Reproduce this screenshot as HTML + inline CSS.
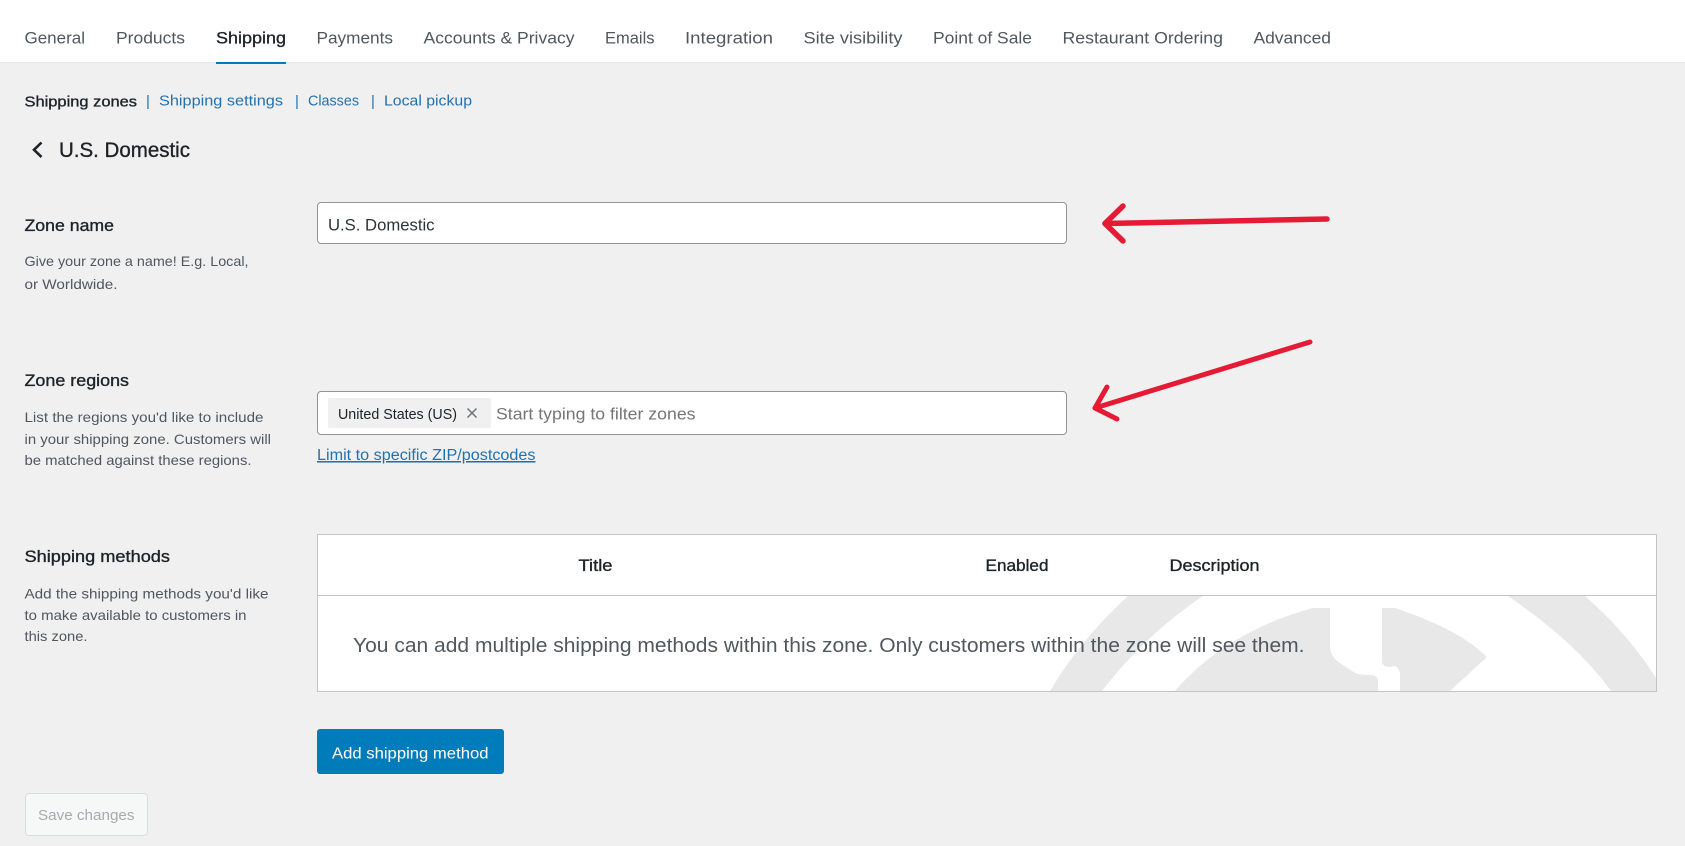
<!DOCTYPE html>
<html lang="en">
<head>
<meta charset="utf-8">
<title>Shipping zones</title>
<style>
html,body{margin:0;padding:0;width:1685px;height:846px;overflow:hidden;background:#f0f0f0;font-family:"Liberation Sans",sans-serif}
.abs{position:absolute;box-sizing:border-box}
svg{position:absolute;left:0;top:0}
text{font-family:"Liberation Sans",sans-serif}
.nav{font-size:17px;fill:#50575e}
.semi{stroke:currentColor;stroke-width:.35px}
.sub{font-size:15px;fill:#2271b1}
.lab{font-size:16.5px;fill:#1d2327;color:#1d2327}
.desc{font-size:14px;fill:#50575e}
.th{font-size:16.5px;fill:#1d2327;color:#1d2327}
</style>
</head>
<body>
<div class="abs" style="left:0;top:0;width:1685px;height:63px;background:#fff;border-bottom:1px solid #e6e6e6"></div>
<div class="abs" style="left:216px;top:62px;width:70px;height:2px;background:#007cba"></div>
<div class="abs" style="left:317px;top:202px;width:750px;height:42px;background:#fff;border:1px solid #949494;border-radius:4px"></div>
<div class="abs" style="left:317px;top:391px;width:750px;height:44px;background:#fff;border:1px solid #949494;border-radius:4px"></div>
<div class="abs" style="left:328px;top:398px;width:163px;height:30px;background:#f0f0f0;border-radius:2px"></div>
<div class="abs" style="left:317px;top:534px;width:1340px;height:158px;background:#fff;border:1px solid #c3c4c7"></div>
<div class="abs" style="left:318px;top:595px;width:1338px;height:1px;background:#c3c4c7"></div>
<div class="abs" style="left:317px;top:729px;width:187px;height:45px;background:#007cba;border-radius:3px"></div>
<div class="abs" style="left:25px;top:793px;width:123px;height:43px;background:#f6f7f7;border:1px solid #dcdcde;border-radius:4px"></div>

<svg width="1685" height="846" viewBox="0 0 1685 846">
  <defs><clipPath id="row"><rect x="318" y="596" width="1338" height="95"/></clipPath></defs>
  <g clip-path="url(#row)" fill="#e8e8e8">
    <path d="M1128 596Q1080 640 1050 691L1102 691Q1145 635 1203 596Z"/>
    <path d="M1175 691C1210 650 1260 622 1313 608L1330 608L1330 647C1331 655 1334 659 1340 663L1355 673C1360 675 1366 675 1373 675C1376 676 1378 678 1378 681L1378 691Z"/>
    <path d="M1382 608L1395 608C1430 620 1462 633 1487 657L1450 691L1400 691L1400 673C1399 669 1397 666 1395 666C1392 666 1391 667 1390 667C1387 667 1384 666 1382 663Z"/>
    <path d="M1508 596C1550 625 1585 655 1611 691L1660 691L1656 678C1635 645 1612 620 1585 596Z"/>
  </g>

  <g fill="none" stroke="#e51a34" stroke-linecap="round" stroke-linejoin="round">
    <path d="M1327 219L1105 223.5" stroke-width="5.5"/>
    <path d="M1123 206L1105 223.5L1123 241" stroke-width="5.5"/>
    <path d="M1310 342L1095 408" stroke-width="5"/>
    <path d="M1107 387L1095 408L1117 419" stroke-width="5"/>
  </g>

  <path d="M41.500 142.500L34 149.800L41.500 157" fill="none" stroke="#1d2327" stroke-width="2.600"/>

  <g lengthAdjust="spacingAndGlyphs">
  <text lengthAdjust="spacingAndGlyphs" class="nav" x="24.500" y="43.500" textLength="60.500">General</text>
  <text lengthAdjust="spacingAndGlyphs" class="nav" x="116" y="43.500" textLength="69">Products</text>
  <text lengthAdjust="spacingAndGlyphs" class="nav semi" x="216" y="43.500" textLength="70" style="fill:#1d2327;color:#1d2327">Shipping</text>
  <text lengthAdjust="spacingAndGlyphs" class="nav" x="316.500" y="43.500" textLength="76.500">Payments</text>
  <text lengthAdjust="spacingAndGlyphs" class="nav" x="423.500" y="43.500" textLength="151">Accounts &amp; Privacy</text>
  <text lengthAdjust="spacingAndGlyphs" class="nav" x="605" y="43.500" textLength="49.500">Emails</text>
  <text lengthAdjust="spacingAndGlyphs" class="nav" x="685" y="43.500" textLength="88">Integration</text>
  <text lengthAdjust="spacingAndGlyphs" class="nav" x="803.500" y="43.500" textLength="99">Site visibility</text>
  <text lengthAdjust="spacingAndGlyphs" class="nav" x="933" y="43.500" textLength="99">Point of Sale</text>
  <text lengthAdjust="spacingAndGlyphs" class="nav" x="1062.500" y="43.500" textLength="160.500">Restaurant Ordering</text>
  <text lengthAdjust="spacingAndGlyphs" class="nav" x="1253.500" y="43.500" textLength="77.500">Advanced</text>
  </g>

  <text lengthAdjust="spacingAndGlyphs" class="sub semi" x="24.500" y="106.500" textLength="112.500" style="fill:#1d2327;color:#1d2327">Shipping zones</text>
  <text class="sub" x="146" y="106">|</text>
  <text lengthAdjust="spacingAndGlyphs" class="sub" x="159" y="105.500" textLength="124">Shipping settings</text>
  <text class="sub" x="295" y="106">|</text>
  <text lengthAdjust="spacingAndGlyphs" class="sub" x="308" y="105.500" textLength="51">Classes</text>
  <text class="sub" x="371" y="106">|</text>
  <text lengthAdjust="spacingAndGlyphs" class="sub" x="384" y="105.500" textLength="88">Local pickup</text>

  <text lengthAdjust="spacingAndGlyphs" class="semi" x="59" y="157" font-size="21" textLength="131" style="fill:#1d2327;color:#1d2327">U.S. Domestic</text>

  <text lengthAdjust="spacingAndGlyphs" class="lab semi" x="24.500" y="231" textLength="89.500">Zone name</text>
  <text lengthAdjust="spacingAndGlyphs" class="desc" x="24.500" y="266" textLength="224">Give your zone a name! E.g. Local,</text>
  <text lengthAdjust="spacingAndGlyphs" class="desc" x="24.500" y="289" textLength="93">or Worldwide.</text>
  <text lengthAdjust="spacingAndGlyphs" x="328" y="230.500" font-size="17" textLength="106.500" fill="#2c3338">U.S. Domestic</text>

  <text lengthAdjust="spacingAndGlyphs" class="lab semi" x="24.500" y="386" textLength="104.500">Zone regions</text>
  <text lengthAdjust="spacingAndGlyphs" class="desc" x="24.500" y="422" textLength="239">List the regions you'd like to include</text>
  <text lengthAdjust="spacingAndGlyphs" class="desc" x="24.500" y="444" textLength="246.500">in your shipping zone. Customers will</text>
  <text lengthAdjust="spacingAndGlyphs" class="desc" x="24.500" y="465" textLength="227">be matched against these regions.</text>
  <text lengthAdjust="spacingAndGlyphs" x="338" y="419" font-size="14.500" textLength="119" fill="#1d2327">United States (US)</text>
  <path d="M467.500 408.500L476.500 417.500M476.500 408.500L467.500 417.500" stroke="#6b6f73" stroke-width="1.400" fill="none"/>
  <text lengthAdjust="spacingAndGlyphs" x="496" y="419.500" font-size="17" textLength="199.500" fill="#757575">Start typing to filter zones</text>
  <text lengthAdjust="spacingAndGlyphs" x="317" y="460" font-size="15.500" textLength="218.500" fill="#2271b1" text-decoration="underline">Limit to specific ZIP/postcodes</text>

  <text lengthAdjust="spacingAndGlyphs" class="lab semi" x="24.500" y="562" textLength="145.500">Shipping methods</text>
  <text lengthAdjust="spacingAndGlyphs" class="desc" x="24.500" y="598.500" textLength="244">Add the shipping methods you'd like</text>
  <text lengthAdjust="spacingAndGlyphs" class="desc" x="24.500" y="620" textLength="222">to make available to customers in</text>
  <text lengthAdjust="spacingAndGlyphs" class="desc" x="24.500" y="641" textLength="63">this zone.</text>

  <text lengthAdjust="spacingAndGlyphs" class="th semi" x="578.500" y="571" textLength="34">Title</text>
  <text lengthAdjust="spacingAndGlyphs" class="th semi" x="985.500" y="571" textLength="63">Enabled</text>
  <text lengthAdjust="spacingAndGlyphs" class="th semi" x="1169.500" y="571" textLength="90">Description</text>
  <text lengthAdjust="spacingAndGlyphs" x="353" y="652" font-size="20" textLength="951.500" fill="#50575e">You can add multiple shipping methods within this zone. Only customers within the zone will see them.</text>

  <text lengthAdjust="spacingAndGlyphs" x="332" y="758.500" font-size="15.500" textLength="156.500" fill="#fff">Add shipping method</text>
  <text lengthAdjust="spacingAndGlyphs" x="38" y="820" font-size="15" textLength="96.500" fill="#a7aaad">Save changes</text>
</svg>
</body>
</html>
